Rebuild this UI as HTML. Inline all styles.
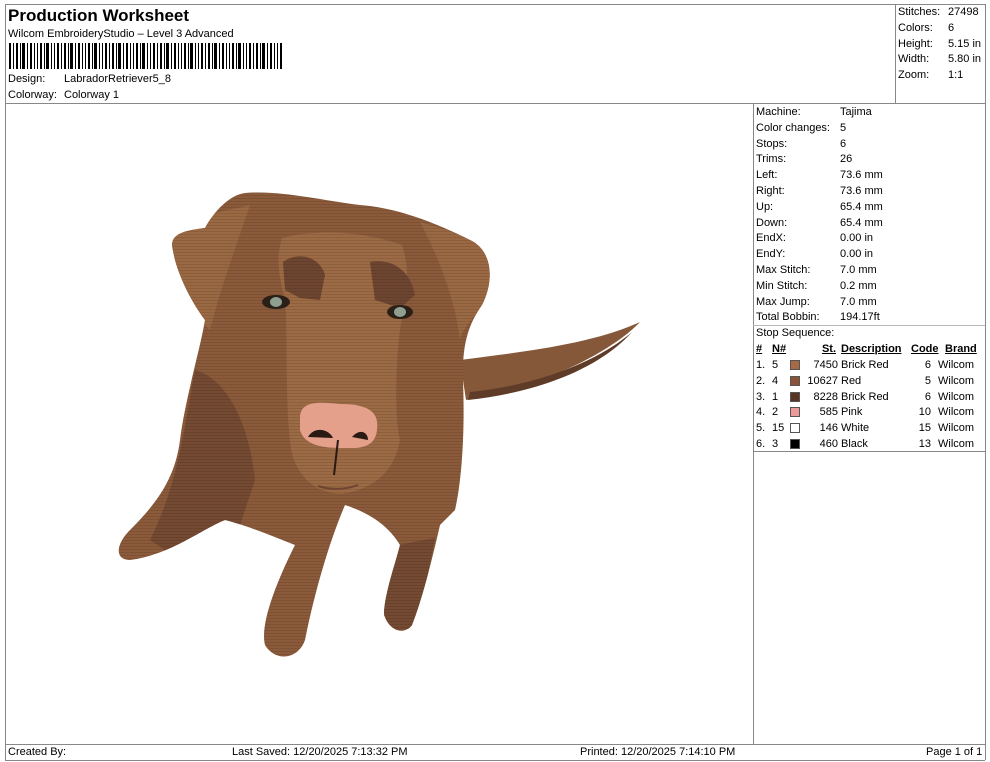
<!DOCTYPE html>
<html><head><meta charset="utf-8"><style>
*{margin:0;padding:0;box-sizing:border-box}
body{width:990px;height:762px;background:#fff;font-family:"Liberation Sans",Arial,sans-serif;color:#000;position:relative;overflow:hidden}
.a{position:absolute;white-space:nowrap;font-size:11px;line-height:13px}
.ln{position:absolute;background:#888}
</style></head><body>
<div class="ln" style="left:5px;top:4px;width:980px;height:1px"></div>
<div class="ln" style="left:5px;top:4px;width:1px;height:756px"></div>
<div class="ln" style="left:985px;top:4px;width:1px;height:756px"></div>
<div class="ln" style="left:5px;top:103px;width:980px;height:1px"></div>
<div class="ln" style="left:895px;top:4px;width:1px;height:100px"></div>
<div class="ln" style="left:753px;top:103px;width:1px;height:641px"></div>
<div class="ln" style="left:753px;top:325px;width:232px;height:1px;background:#bbb"></div>
<div class="ln" style="left:753px;top:451px;width:232px;height:1px"></div>
<div class="ln" style="left:5px;top:744px;width:980px;height:1px"></div>
<div class="ln" style="left:5px;top:760px;width:980px;height:1px"></div>

<div class="a" style="left:8px;top:6px;font-size:17px;line-height:20px;font-weight:bold">Production Worksheet</div>
<div class="a" style="left:8px;top:28px">Wilcom EmbroideryStudio – Level 3 Advanced</div>
<svg style="position:absolute;left:9px;top:43px" width="273" height="26">
<path d="M0 0h2v26h-2zM4 0h1v26h-1zM7 0h2v26h-2zM11 0h1v26h-1zM13 0h3v26h-3zM18 0h1v26h-1zM21 0h2v26h-2zM25 0h1v26h-1zM28 0h1v26h-1zM31 0h2v26h-2zM35 0h1v26h-1zM37 0h3v26h-3zM42 0h1v26h-1zM45 0h1v26h-1zM48 0h2v26h-2zM52 0h1v26h-1zM55 0h2v26h-2zM59 0h1v26h-1zM61 0h3v26h-3zM66 0h1v26h-1zM69 0h2v26h-2zM73 0h1v26h-1zM76 0h1v26h-1zM79 0h2v26h-2zM83 0h1v26h-1zM85 0h3v26h-3zM90 0h1v26h-1zM93 0h1v26h-1zM96 0h2v26h-2zM100 0h1v26h-1zM103 0h2v26h-2zM107 0h1v26h-1zM109 0h3v26h-3zM114 0h1v26h-1zM117 0h2v26h-2zM121 0h1v26h-1zM124 0h1v26h-1zM127 0h2v26h-2zM131 0h1v26h-1zM133 0h3v26h-3zM138 0h1v26h-1zM141 0h1v26h-1zM144 0h2v26h-2zM148 0h1v26h-1zM151 0h2v26h-2zM155 0h1v26h-1zM157 0h3v26h-3zM162 0h1v26h-1zM165 0h2v26h-2zM169 0h1v26h-1zM172 0h1v26h-1zM175 0h2v26h-2zM179 0h1v26h-1zM181 0h3v26h-3zM186 0h1v26h-1zM189 0h1v26h-1zM192 0h2v26h-2zM196 0h1v26h-1zM199 0h2v26h-2zM203 0h1v26h-1zM205 0h3v26h-3zM210 0h1v26h-1zM213 0h2v26h-2zM217 0h1v26h-1zM220 0h1v26h-1zM223 0h2v26h-2zM227 0h1v26h-1zM229 0h3v26h-3zM234 0h1v26h-1zM237 0h1v26h-1zM240 0h2v26h-2zM244 0h1v26h-1zM247 0h2v26h-2zM251 0h1v26h-1zM253 0h3v26h-3zM258 0h1v26h-1zM261 0h2v26h-2zM265 0h1v26h-1zM268 0h1v26h-1zM271 0h2v26h-2z" fill="#000"/>
</svg>
<div class="a" style="left:8px;top:73px">Design:</div><div class="a" style="left:64px;top:73px">LabradorRetriever5_8</div>
<div class="a" style="left:8px;top:89px">Colorway:</div><div class="a" style="left:64px;top:89px">Colorway 1</div>

<div class="a" style="left:898px;top:6px">Stitches:</div><div class="a" style="left:948px;top:6px">27498</div>
<div class="a" style="left:898px;top:22px">Colors:</div><div class="a" style="left:948px;top:22px">6</div>
<div class="a" style="left:898px;top:38px">Height:</div><div class="a" style="left:948px;top:38px">5.15 in</div>
<div class="a" style="left:898px;top:53px">Width:</div><div class="a" style="left:948px;top:53px">5.80 in</div>
<div class="a" style="left:898px;top:69px">Zoom:</div><div class="a" style="left:948px;top:69px">1:1</div>

<div style="position:absolute;left:756px;top:105px;font-size:11px;line-height:15.8px">
<div>Machine:</div><div>Color changes:</div><div>Stops:</div><div>Trims:</div><div>Left:</div><div>Right:</div><div>Up:</div><div>Down:</div><div>EndX:</div><div>EndY:</div><div>Max Stitch:</div><div>Min Stitch:</div><div>Max Jump:</div><div>Total Bobbin:</div><div>Stop Sequence:</div>
</div>
<div style="position:absolute;left:840px;top:105px;font-size:11px;line-height:15.8px">
<div>Tajima</div><div>5</div><div>6</div><div>26</div><div>73.6 mm</div><div>73.6 mm</div><div>65.4 mm</div><div>65.4 mm</div><div>0.00 in</div><div>0.00 in</div><div>7.0 mm</div><div>0.2 mm</div><div>7.0 mm</div><div>194.17ft</div>
</div>
<div style="position:absolute;left:756px;top:342px;font-size:11px;line-height:15.8px;width:228px">
<div style="position:relative;height:15.8px;font-weight:bold;"><span style="position:absolute;left:0;text-decoration:underline">#</span><span style="position:absolute;left:16px;text-decoration:underline">N#</span><span style="position:absolute;right:148px;text-decoration:underline">St.</span><span style="position:absolute;left:85px;text-decoration:underline">Description</span><span style="position:absolute;left:155px;text-decoration:underline">Code</span><span style="position:absolute;left:189px;text-decoration:underline">Brand</span></div>
</div>
<div id="rows" style="position:absolute;left:756px;top:358px;font-size:11px;line-height:15.8px;width:228px"></div>
<script>
var r=[["1.","5","#a86a46","7450","Brick Red","6"],["2.","4","#8b5437","10627","Red","5"],["3.","1","#5a3422","8228","Brick Red","6"],["4.","2","#ec9a98","585","Pink","10"],["5.","15","#fff","146","White","15"],["6.","3","#000","460","Black","13"]];
var h="";r.forEach(function(x){h+='<div style="position:relative;height:15.8px"><span style="position:absolute;left:0">'+x[0]+'</span><span style="position:absolute;left:16px">'+x[1]+'</span><span style="position:absolute;left:34px;top:2px;width:10px;height:10px;background:'+x[2]+';border:1px solid #555"></span><span style="position:absolute;right:146px">'+x[3]+'</span><span style="position:absolute;left:85px">'+x[4]+'</span><span style="position:absolute;right:53px">'+x[5]+'</span><span style="position:absolute;left:182px">Wilcom</span></div>'});
document.getElementById("rows").innerHTML=h;
</script>

<svg style="position:absolute;left:0;top:0" width="990" height="762">
<defs>
<pattern id="st" width="3" height="3" patternUnits="userSpaceOnUse"><rect width="3" height="1" fill="#000" opacity=".1"/></pattern>
<path id="sil" d="M245,193 C280,190 320,200 360,205 C400,208 440,225 470,240 C492,250 495,280 482,305 C468,325 462,345 463,380 C465,430 462,480 455,510 L440,525 C432,560 422,600 412,625 C405,635 390,632 384,615 C384,595 395,565 400,545 C385,520 360,510 345,505 C330,540 315,590 305,640 C298,660 275,662 265,645 C260,625 275,585 295,545 C270,535 245,525 225,520 C200,530 170,555 130,560 C115,560 115,545 130,530 C155,505 175,480 180,440 C185,400 200,350 205,320 C190,300 175,270 172,245 C172,232 190,230 205,228 C215,210 230,195 245,193Z"/>
<clipPath id="cp"><use href="#sil"/></clipPath>
</defs>
<path d="M460,360 C520,352 590,345 640,322 C612,352 540,388 466,400 Z" fill="#86583a"/>
<path d="M470,392 C540,385 600,360 632,332 C600,368 540,392 468,400 Z" fill="#5f3c28"/>
<use href="#sil" fill="#8a5a3a"/>
<g clip-path="url(#cp)">
<path d="M170,225 C200,215 230,210 250,205 C235,250 220,290 210,330 L180,300Z" fill="#9a6842"/>
<path d="M420,222 C450,230 480,240 495,260 L485,305 C470,320 462,330 460,340 C455,300 440,260 420,222Z" fill="#9a6842"/>
<path d="M195,370 C230,380 250,430 255,480 L240,525 L180,560 L150,540 C180,480 185,420 195,370Z" fill="#744a32"/>
<path d="M282,238 C320,228 365,232 402,245 C412,275 405,300 400,330 C395,370 395,420 400,440 C395,470 375,490 340,494 C310,492 292,470 290,440 C285,400 288,340 285,300 C280,280 275,260 282,238Z" fill="#9c6a44"/>
<path d="M283,262 C300,250 320,258 325,275 L320,300 300,298 285,290Z" fill="#6e4530"/>
<path d="M370,262 C392,258 410,270 415,295 L400,308 375,300Z" fill="#6e4530"/>
<path d="M398,545 L435,538 425,590 412,628 390,632 383,610 392,570Z" fill="#744a32"/>
<rect x="100" y="180" width="400" height="490" fill="url(#st)"/>
</g>
<ellipse cx="276" cy="302" rx="14" ry="7" fill="#2a2018"/><ellipse cx="276" cy="302" rx="6" ry="5" fill="#8fa090"/>
<ellipse cx="400" cy="312" rx="13" ry="7" fill="#2a2018"/><ellipse cx="400" cy="312" rx="6" ry="5" fill="#8fa090"/>
<path d="M300,418 C300,400 320,402 340,404 C365,404 380,410 377,430 C375,450 355,448 345,448 C330,448 305,448 300,430Z" fill="#e5a08c"/>
<path d="M308,437 C315,425 330,430 333,438 Z M352,437 C360,428 368,432 368,440Z" fill="#2a1a14"/>
<path d="M338,440 L334,475" stroke="#2a1a14" stroke-width="2"/>
<path d="M318,486 C330,490 345,490 358,485" stroke="#6e4530" stroke-width="2" fill="none"/>
</svg>

<div class="a" style="left:8px;top:746px">Created By:</div>
<div class="a" style="left:232px;top:746px">Last Saved: 12/20/2025 7:13:32 PM</div>
<div class="a" style="left:580px;top:746px">Printed: 12/20/2025 7:14:10 PM</div>
<div class="a" style="left:926px;top:746px">Page 1 of 1</div>
</body></html>
